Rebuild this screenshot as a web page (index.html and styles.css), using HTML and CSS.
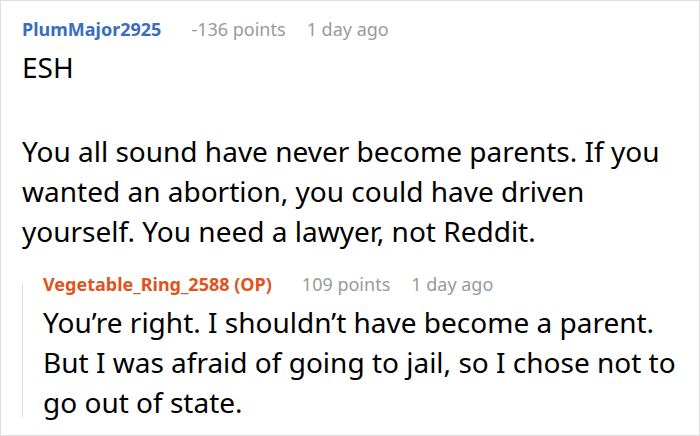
FILE: index.html
```html
<!DOCTYPE html>
<html>
<head>
<meta charset="utf-8">
<link rel="stylesheet" href="styles.css">
</head>
<body>
<div class="card">
  <div class="meta">
    <span class="user">PlumMajor2925</span>
    <span class="info">-136 points</span>
    <span class="info">1 day ago</span>
  </div>
  <div class="body">
    <p>ESH</p>
    <p>You all sound have never become parents. If you wanted an abortion, you could have driven yourself. You need a lawyer, not Reddit.</p>
  </div>
  <div class="reply">
    <div class="meta">
      <span class="user op">Vegetable_Ring_2588 (OP)</span>
      <span class="info">109 points</span>
      <span class="info">1 day ago</span>
    </div>
    <div class="body">
      <p>You’re right. I shouldn’t have become a parent. But I was afraid of going to jail, so I chose not to go out of state.</p>
    </div>
  </div>
</div>
</body>
</html>
```
FILE: styles.css
```css
html, body {
  margin: 0;
  padding: 0;
  background: #fff;
}
.card {
  box-sizing: border-box;
  width: 700px;
  height: 436px;
  border: 1px solid #dedede;
  padding: 13px 17px 0 21px;
  background: #fff;
  font-family: "Noto Sans", "Open Sans", sans-serif;
  overflow: hidden;
}
.meta {
  display: flex;
  align-items: baseline;
  gap: 0 21px;
  font-size: 18px;
  line-height: 30px;
  margin-bottom: 3px;
  white-space: nowrap;
}
.user {
  font-weight: 700;
  color: #3b6dbe;
  margin-right: 9px;
}
.user.op {
  color: #dd5420;
}
.info {
  color: #9a9a9a;
}
.body {
  font-size: 28px;
  line-height: 40px;
  color: #000;
}
.body p {
  margin: 0 0 44px 0;
}
.body p:last-child {
  margin-bottom: 0;
}
.reply {
  position: relative;
  margin-top: 18px;
  padding-left: 21px;
}
.reply::before {
  content: "";
  position: absolute;
  left: 0;
  top: 15px;
  bottom: 5px;
  width: 1px;
  background: #dcdcdc;
}
```
